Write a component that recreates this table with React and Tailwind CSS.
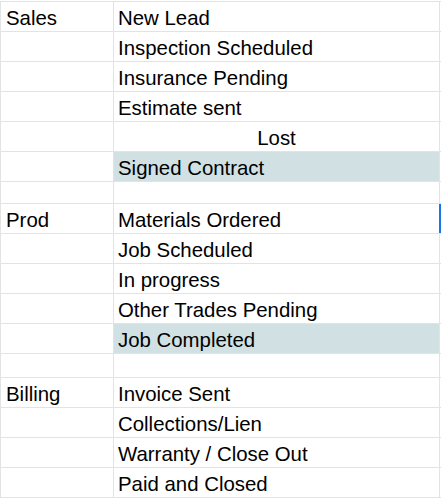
const rows = [
  { group: 'Sales', label: 'New Lead' },
  { label: 'Inspection Scheduled' },
  { label: 'Insurance Pending' },
  { label: 'Estimate sent' },
  { label: 'Lost', center: true },
  { label: 'Signed Contract', highlight: true },
  { spacer: true, h: 'h-[22px]' },
  { group: 'Prod', label: 'Materials Ordered', selected: true },
  { label: 'Job Scheduled' },
  { label: 'In progress' },
  { label: 'Other Trades Pending' },
  { label: 'Job Completed', highlight: true },
  { spacer: true, h: 'h-[24px]' },
  { group: 'Billing', label: 'Invoice Sent' },
  { label: 'Collections/Lien' },
  { label: 'Warranty / Close Out' },
  { label: 'Paid and Closed' },
]

function Row({ row }) {
  const h = row.spacer ? row.h : 'h-[30px]'
  return (
    <div className={`flex ${h} border-b border-[#e2e3e3]`}>
      {/* group column */}
      <div className="flex w-[113px] shrink-0 items-end border-r border-[#e2e3e3] px-[5px] pb-[1px]">
        {row.group}
      </div>
      {/* status column */}
      <div
        className={`flex w-[326px] shrink-0 items-end border-r px-[4px] pb-[1px] ${
          row.highlight ? 'bg-[#d0e0e3]' : ''
        } ${row.center ? 'justify-center' : ''} ${
          row.selected ? 'border-[#1a73e8]' : 'border-[#e2e3e3]'
        }`}
      >
        {row.label}
      </div>
      <div className={`flex-1 ${row.selected ? 'bg-[#1a73e8]' : ''}`} />
    </div>
  )
}

export default function App() {
  return (
    <div className="h-[498px] w-[441px] overflow-hidden bg-white pt-px">
      <div
        className="border-l border-t border-[#e2e3e3] text-[20.4px] leading-[23px] text-black"
        style={{ fontFamily: '"Liberation Sans", Arial, sans-serif' }}
      >
        {rows.map((row, i) => (
          <Row key={i} row={row} />
        ))}
      </div>
    </div>
  )
}
